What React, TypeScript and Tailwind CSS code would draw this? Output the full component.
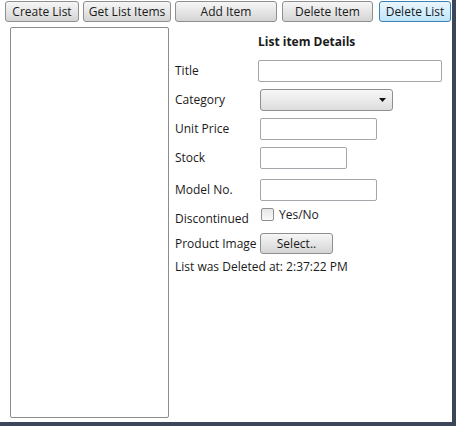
import React from 'react';

const font = { fontFamily: '"Open Sans", "Noto Sans", "DejaVu Sans", sans-serif' };

function Btn({ label, cls, active }: { label: string; cls: string; active?: boolean }) {
  return (
    <button
      className={`${cls} block h-[21px] shrink-0 rounded-[3px] border text-[12px] leading-none text-[#1a1a1a] ${
        active
          ? 'border-[#3c7fb1] bg-gradient-to-b from-[#eaf6fd] to-[#bee6fd]'
          : 'border-[#8e8f8f] bg-gradient-to-b from-[#f6f6f6] via-[#e6e6e6] to-[#d4d4d4]'
      }`}
    >
      {label}
    </button>
  );
}

function Field({ w }: { w: string }) {
  return <div className={`${w} h-[22px] border border-[#a4a6ab] rounded-[2px] bg-white`} />;
}

function Row({ label, top, children, lw = 'w-[85px]' }: { label: string; top: string; children: React.ReactNode; lw?: string }) {
  return (
    <div className={`flex items-center ${top}`}>
      <span className={`${lw} shrink-0 text-[12px] text-[#1a1a1a]`}>{label}</span>
      {children}
    </div>
  );
}

export default function App() {
  return (
    <div
      className="w-[456px] h-[426px] bg-white border-r-4 border-b-4 border-[#3d4558] overflow-hidden"
      style={font}
    >
      {/* toolbar */}
      <div className="flex pt-[1px]">
        <Btn label="Create List" cls="ml-[5px] w-[74px]" />
        <Btn label="Get List Items" cls="ml-[4px] w-[88px]" />
        <Btn label="Add Item" cls="ml-[4px] w-[102px]" />
        <Btn label="Delete Item" cls="ml-[5px] w-[91px]" />
        <Btn label="Delete List" cls="ml-[6px] w-[72px]" active />
      </div>

      <div className="flex mt-[5px]">
        {/* list box */}
        <div className="ml-[10px] w-[159px] h-[391px] shrink-0 border border-[#8c8c8c] rounded-[2px] bg-white" />

        {/* details */}
        <div className="ml-[6px] flex-1 flex flex-col">
          <div className="mt-[7px] h-[16px] pl-[83px] text-[12px] font-bold text-[#1a1a1a] leading-[16px]">
            List item Details
          </div>
          <Row label="Title" top="mt-[10px]" lw="w-[83px]">
            <Field w="w-[184px]" />
          </Row>
          <Row label="Category" top="mt-[7px]">
            <div className="w-[133px] h-[22px] rounded-[3px] border border-[#8e8f8f] bg-gradient-to-b from-[#f6f6f6] via-[#ebebeb] to-[#dcdcdc] flex items-center justify-end pr-[6px]">
              <svg width="7" height="4" viewBox="0 0 7 4"><path d="M0 0h7L3.5 4z" fill="#111" /></svg>
            </div>
          </Row>
          <Row label="Unit Price" top="mt-[7px]">
            <Field w="w-[117px]" />
          </Row>
          <Row label="Stock" top="mt-[7px]">
            <Field w="w-[87px]" />
          </Row>
          <Row label="Model No." top="mt-[10px]">
            <Field w="w-[117px]" />
          </Row>
          <div className="flex mt-[7px] h-[18px]">
            <span className="w-[86px] shrink-0 text-[12px] text-[#1a1a1a] self-end leading-[14px]">Discontinued</span>
            <div className="w-[13px] h-[13px] border border-[#8e8f8f] rounded-[2px] bg-gradient-to-b from-[#e6e6e6] to-[#fafafa]" />
            <span className="ml-[5px] text-[12px] leading-[13px] text-[#1a1a1a]">Yes/No</span>
          </div>
          <Row label="Product Image" top="mt-[7px]">
            <Btn label="Select.." cls="w-[73px]" />
          </Row>
          <div className="mt-[5px] text-[12px] text-[#1a1a1a] leading-[16px]">List was Deleted at: 2:37:22 PM</div>
        </div>
      </div>
    </div>
  );
}
